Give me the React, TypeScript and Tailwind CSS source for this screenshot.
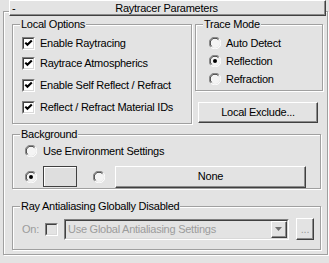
import React from "react";

const raised =
  "border border-t-white border-l-white border-b-[#404040] border-r-[#404040] shadow-[inset_-1px_-1px_0_#8c8c8c]";

function Check({ on, disabled }: { on?: boolean; disabled?: boolean }) {
  return (
    <span
      className={`block h-[13px] w-[13px] shrink-0 border border-t-[#808080] border-l-[#808080] border-b-white border-r-white ${
        disabled ? "bg-[#e3e3e3]" : "bg-white"
      }`}
    >
      <span className="block h-full w-full border border-t-[#404040] border-l-[#404040] border-b-[#d8d8d8] border-r-[#d8d8d8]">
        {on && (
          <svg width="9" height="9" viewBox="0 0 9 9" className="block">
            <polyline points="1.3,3.6 3.4,5.8 7.8,1.4" fill="none" stroke="#000" strokeWidth="2.1" />
          </svg>
        )}
      </span>
    </span>
  );
}

function Radio({ on }: { on?: boolean }) {
  return (
    <svg width="12" height="12" viewBox="0 0 12 12" className="block shrink-0">
      <circle cx="6" cy="6" r="5" fill="#f4f4f4" />
      <path d="M1.8 10.2 A5.5 5.5 0 0 1 10.2 1.8" fill="none" stroke="#808080" strokeWidth="1" />
      <path d="M2.6 9.4 A4.5 4.5 0 0 1 9.4 2.6" fill="none" stroke="#303030" strokeWidth="1" />
      <path d="M10.2 1.8 A5.5 5.5 0 0 1 1.8 10.2" fill="none" stroke="#ffffff" strokeWidth="1" />
      {on && <circle cx="6" cy="6" r="2" fill="#000" />}
    </svg>
  );
}

function Group({
  title,
  className,
  children,
}: {
  title: string;
  className: string;
  children?: React.ReactNode;
}) {
  return (
    <div
      className={`border border-[#a0a0a0] shadow-[inset_1px_1px_0_#fff,1px_1px_0_#fff] ${className}`}
    >
      <div className="-mt-[7px] ml-[7px] w-fit bg-[#e3e3e3] px-[1px] leading-[13px]">{title}</div>
      {children}
    </div>
  );
}

const localOptions = [
  { label: "Enable Raytracing", h: "h-[20px]" },
  { label: "Raytrace Atmospherics", h: "h-[21px]" },
  { label: "Enable Self Reflect / Refract", h: "h-[22px]" },
  { label: "Reflect / Refract Material IDs", h: "h-[22px]" },
];

const traceModes = ["Auto Detect", "Reflection", "Refraction"];

export default function App() {
  return (
    <div className="h-[263px] w-[329px] overflow-hidden bg-[#e3e3e3] font-['Liberation_Sans',Arial,sans-serif] text-[11px] leading-[13px] tracking-[-0.25px] text-black">
      {/* rollout header */}
      <div className={`relative z-10 mx-[9px] flex h-[16px] w-[317px] items-center bg-[#e3e3e3] ${raised}`}>
        <span className="w-[14px] pl-[2px]">-</span>
        <span className="flex-1 pr-[16px] text-center">Raytracer Parameters</span>
      </div>

      <div className="mx-[3px] -mt-[5px] h-[244px] w-[325px] border border-[#a0a0a0] pl-[8px] pt-[12px] shadow-[inset_1px_1px_0_#fff,1px_1px_0_#fff]">
        <div className="flex gap-[3px]">
          <Group title="Local Options" className="h-[100px] w-[180px]">
            <div className="mt-[2px] flex flex-col">
              {localOptions.map((o) => (
                <div key={o.label} className={`flex items-center gap-[5px] pl-[9px] ${o.h}`}>
                  <Check on />
                  <span>{o.label}</span>
                </div>
              ))}
            </div>
          </Group>

          <div className="flex w-[128px] flex-col">
            <Group title="Trace Mode" className="h-[67px] w-[128px]">
              <div className="mt-[3px] flex flex-col">
                {traceModes.map((m) => (
                  <div key={m} className="flex h-[18px] items-center gap-[5px] pl-[13px]">
                    <Radio on={m === "Reflection"} />
                    <span>{m}</span>
                  </div>
                ))}
              </div>
            </Group>
            <button
              type="button"
              className={`ml-[3px] mt-[11px] flex h-[21px] w-[120px] items-center justify-center bg-[#e3e3e3] ${raised}`}
            >
              Local Exclude...
            </button>
          </div>
        </div>

        <Group title="Background" className="mt-[10px] h-[55px] w-[309px]">
          <div className="mt-[1px] flex h-[18px] items-center gap-[6px] pl-[12px]">
            <Radio />
            <span>Use Environment Settings</span>
          </div>
          <div className="mt-[6px] flex h-[21px] items-center pl-[12px]">
            <Radio on />
            <span className="ml-[6px] block h-[21px] w-[34px] border border-[#404040] bg-[#dedede] shadow-[inset_1px_1px_0_#fff]" />
            <span className="ml-[16px]">
              <Radio />
            </span>
            <button
              type="button"
              className={`ml-[10px] flex h-[22px] w-[191px] items-center justify-center bg-[#e3e3e3] ${raised}`}
            >
              None
            </button>
          </div>
        </Group>

        <Group title="Ray Antialiasing Globally Disabled" className="mt-[17px] h-[44px] w-[309px]">
          <div className="mt-[5px] flex h-[22px] items-center pl-[9px] text-[#9c9c9c]">
            <span>On:</span>
            <span className="ml-[6px]">
              <Check disabled />
            </span>
            <div className="ml-[6px] flex h-[21px] w-[225px] border border-t-[#808080] border-l-[#808080] border-b-white border-r-white">
              <div className="flex flex-1 items-center border border-t-[#404040] border-l-[#404040] border-b-[#d8d8d8] border-r-[#d8d8d8] pl-[2px]">
                <span className="flex-1">Use Global Antialiasing Settings</span>
                <span className={`flex h-[17px] w-[16px] items-center justify-center bg-[#e3e3e3] ${raised}`}>
                  <svg width="7" height="4" viewBox="0 0 7 4" className="block">
                    <polygon points="0,0 7,0 3.5,4" fill="#707070" />
                  </svg>
                </span>
              </div>
            </div>
            <button
              type="button"
              className={`ml-[7px] flex h-[22px] w-[18px] items-center justify-center bg-[#e3e3e3] text-[#9c9c9c] ${raised}`}
            >
              ...
            </button>
          </div>
        </Group>
      </div>
    </div>
  );
}
